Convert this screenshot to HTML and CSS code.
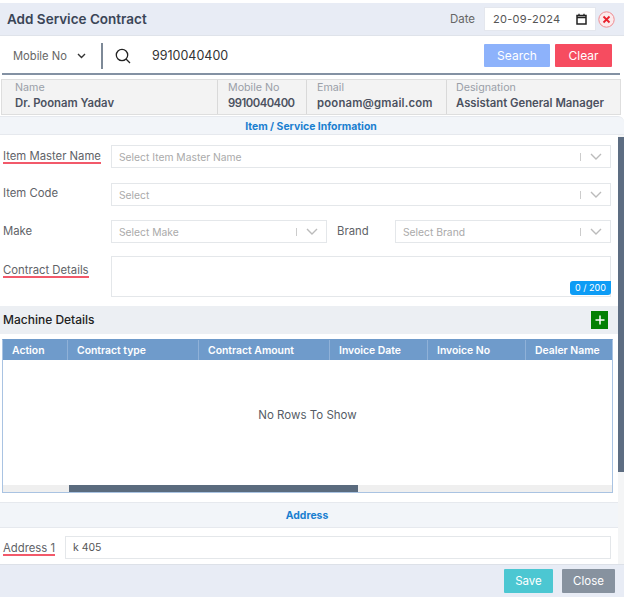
FILE: index.html
```html
<!DOCTYPE html>
<html lang="en">
<head>
    <meta charset="UTF-8">
    <title>Add Service Contract</title>
    <link rel="stylesheet" href="styles.css">
</head>
<body>
<div class="modal">
    <header class="head">
        <h1>Add Service Contract</h1>
        <span class="date-label">Date</span>
        <div class="date-box">
            <span>20-09-2024</span>
            <svg width="11" height="12" viewBox="0 0 11 12"><path d="M1 2.500h9v8.500H1z M1 4.500h9" fill="none" stroke="#222" stroke-width="1.500"/><path d="M3 .8v2M8 .8v2" stroke="#222" stroke-width="1.300"/></svg>
        </div>
        <svg class="close-x" width="17" height="17" viewBox="0 0 17 17"><circle cx="8.500" cy="8.500" r="7.700" fill="#fbeaec" stroke="#f08a8f" stroke-width="1"/><path d="M5.500 5.500l6 6M11.500 5.500l-6 6" stroke="#e8202c" stroke-width="1.800"/></svg>
    </header>

    <div class="search-row">
        <div class="search-type">
            <span>Mobile No</span>
            <svg width="9" height="6" viewBox="0 0 9 6"><path d="M1 1l3.500 3.500L8 1" fill="none" stroke="#333" stroke-width="1.400"/></svg>
        </div>
        <div class="search-sep"></div>
        <svg class="search-icon" width="16" height="16" viewBox="0 0 16 16"><circle cx="7" cy="7" r="5.700" fill="none" stroke="#222" stroke-width="1.300"/><path d="M11 11l4 4" stroke="#222" stroke-width="1.300"/></svg>
        <span class="search-value">9910040400</span>
        <button class="btn btn-search">Search</button>
        <button class="btn btn-clear">Clear</button>
    </div>

    <div class="info-strip">
        <div class="info-cell cell-name"><label>Name</label><b>Dr. Poonam Yadav</b></div>
        <div class="info-cell cell-mobile"><label>Mobile No</label><b>9910040400</b></div>
        <div class="info-cell cell-email"><label>Email</label><b>poonam@gmail.com</b></div>
        <div class="info-cell cell-desig"><label>Designation</label><b>Assistant General Manager</b></div>
    </div>

    <div class="section-title first">Item / Service Information</div>

    <div class="content">
        <div class="main">
            <div class="form-row row-item">
                <label class="field-label"><span class="req">Item Master Name</span></label>
                <div class="select"><span>Select Item Master Name</span><i></i><svg width="12" height="7" viewBox="0 0 12 7"><path d="M1 1l5 5 5-5" fill="none" stroke="#bbb" stroke-width="1.400"/></svg></div>
            </div>
            <div class="form-row row-code">
                <label class="field-label">Item Code</label>
                <div class="select"><span>Select</span><i></i><svg width="12" height="7" viewBox="0 0 12 7"><path d="M1 1l5 5 5-5" fill="none" stroke="#bbb" stroke-width="1.400"/></svg></div>
            </div>
            <div class="form-row row-make">
                <label class="field-label">Make</label>
                <div class="select"><span>Select Make</span><i></i><svg width="12" height="7" viewBox="0 0 12 7"><path d="M1 1l5 5 5-5" fill="none" stroke="#bbb" stroke-width="1.400"/></svg></div>
                <label class="field-label brand-label">Brand</label>
                <div class="select"><span>Select Brand</span><i></i><svg width="12" height="7" viewBox="0 0 12 7"><path d="M1 1l5 5 5-5" fill="none" stroke="#bbb" stroke-width="1.400"/></svg></div>
            </div>
            <div class="form-row row-details">
                <label class="field-label"><span class="req">Contract Details</span></label>
                <div class="textarea"><span class="counter">0 / 200</span></div>
            </div>

            <div class="machine-bar">
                <span>Machine Details</span>
                <div class="add-btn"><svg width="10" height="10" viewBox="0 0 10 10"><path d="M5 .5v9M.5 5h9" stroke="#fff" stroke-width="1.500"/></svg></div>
            </div>

            <div class="grid">
                <div class="grid-head">
                    <div class="col col-action">Action</div>
                    <div class="col col-type">Contract type</div>
                    <div class="col col-amount">Contract Amount</div>
                    <div class="col col-date">Invoice Date</div>
                    <div class="col col-no">Invoice No</div>
                    <div class="col col-dealer">Dealer Name</div>
                </div>
                <div class="grid-body">No Rows To Show</div>
                <div class="grid-scroll"><div class="grid-thumb"></div></div>
            </div>

            <div class="section-title address">Address</div>

            <div class="form-row row-address">
                <label class="field-label"><span class="req">Address 1</span></label>
                <div class="select value">k 405</div>
            </div>
        </div>
        <div class="scrollbar"><div class="scroll-thumb"></div></div>
    </div>

    <footer class="foot">
        <button class="btn btn-save">Save</button>
        <button class="btn btn-close">Close</button>
    </footer>
</div>
</body>
</html>
```

FILE: styles.css
```css
* {
    box-sizing: border-box;
}
body {
    margin: 0;
    background-color: #ffffff;
    font-family: Inter, "Open Sans", sans-serif;
    color: #555;
}
.modal {
    width: 624px;
    height: 597px;
    overflow: hidden;
    display: flex;
    flex-direction: column;
    padding-top: 3px;
}

/* header */
.head {
    height: 33px;
    flex: none;
    display: flex;
    align-items: center;
    padding-left: 7px;
    background-color: #e8ecf5;
    border-bottom: 1px solid #dfe3ea;
}
.head h1 {
    margin: 0;
    flex: 1;
    font-size: 13.500px;
    font-weight: 600;
    color: #3a4557;
}
.date-label {
    font-size: 11.500px;
    color: #666;
    margin-right: 9px;
}
.date-box {
    width: 112px;
    height: 24px;
    display: flex;
    align-items: center;
    justify-content: space-between;
    padding: 0 8px;
    background-color: #fff;
    border: 1px solid #e4e7ee;
    font-size: 11px;
    letter-spacing: 0.300px;
    color: #555;
}
.close-x {
    margin: 0 9px 0 2px;
}

/* search */
.search-row {
    height: 39px;
    flex: none;
    display: flex;
    align-items: center;
    margin: 0 4px 0 2px;
    padding: 2px 0 0 11px;
    border-bottom: 2px solid #8391a3;
}
.search-type {
    width: 76px;
    display: flex;
    align-items: center;
    justify-content: space-between;
    padding-right: 3px;
    font-size: 11.200px;
    color: #666;
}
.search-sep {
    width: 2px;
    height: 26px;
    margin: 0 12px;
    background-color: #7d8997;
}
.search-icon {
    flex: none;
}
.search-value {
    flex: 1;
    margin-left: 21px;
    font-size: 12.500px;
    color: #333;
}
.btn {
    border: 1px solid transparent;
    border-radius: 1px;
    font-family: inherit;
    color: #fff;
    padding: 0;
}
.btn-search {
    width: 66px;
    height: 23px;
    background-color: #8db2fb;
    font-size: 12px;
    margin-right: 5px;
}
.btn-clear {
    width: 57px;
    height: 23px;
    margin-right: 8px;
    background-color: #f64c60;
    font-size: 12px;
}

/* patient strip */
.info-strip {
    height: 36px;
    flex: none;
    display: flex;
    margin: 4px 3px 0 1px;
    background-color: #f3f3f3;
    border: 1px solid #dedede;
}
.info-cell {
    padding: 1px 0 0 13px;
    border-right: 1px solid #d9d9d9;
    display: flex;
    flex-direction: column;
    white-space: nowrap;
    overflow: hidden;
}
.info-cell label {
    font-size: 10.700px;
    line-height: 14px;
    color: #9a9fa8;
}
.info-cell b {
    font-size: 11.300px;
    line-height: 16px;
    font-weight: 600;
    color: #4b5160;
}
.cell-name {
    width: 216px;
}
.cell-mobile {
    width: 89px;
    padding-left: 10px;
}
.cell-mobile b {
    letter-spacing: -0.500px;
}
.cell-email {
    width: 140px;
    padding-left: 10px;
}
.cell-email b {
    letter-spacing: 0.200px;
}
.cell-desig {
    flex: 1;
    border-right: none;
    padding-left: 9px;
}

/* body */
.content {
    flex: 1;
    min-height: 0;
    display: flex;
}
.main {
    width: 618px;
    flex: none;
}
.scrollbar {
    flex: 1;
    padding-top: 2px;
    background-color: #f4f5f6;
}
.scroll-thumb {
    height: 335px;
    background-color: #5d6d82;
}
.section-title {
    flex: none;
    background-color: #f2f5f9;
    border-top: 1px solid #e6e9ee;
    border-bottom: 1px solid #e6e9ee;
    text-align: center;
    font-size: 10.400px;
    font-weight: 700;
    color: #1a7fd0;
}
.section-title.first {
    height: 19px;
    margin-top: 1px;
    line-height: 19px;
    border-top-right-radius: 6px;
    padding-right: 2px;
}
.section-title.address {
    height: 26px;
    margin-top: 9px;
    line-height: 25px;
    padding-right: 4px;
}
.form-row {
    display: flex;
    align-items: flex-start;
    padding: 0 7px 0 3px;
}
.row-item {
    margin-top: 10px;
}
.row-code {
    margin-top: 15px;
}
.row-make {
    margin-top: 14px;
}
.row-details {
    margin-top: 13px;
}
.row-address {
    margin-top: 8px;
}
.field-label {
    width: 108px;
    flex: none;
    padding-top: 2px;
    font-size: 11.300px;
    line-height: 17px;
    color: #5f6368;
    white-space: nowrap;
}
.req {
    display: inline-block;
    border-bottom: 2px solid #f2596a;
    line-height: 11px;
}
.row-item .field-label {
    padding-top: 3px;
}
.row-make .field-label {
    padding-top: 3px;
}
.row-details .field-label {
    padding-top: 6px;
}
.row-address .field-label {
    width: 62px;
    padding-top: 4px;
}
.brand-label {
    width: 58px;
    margin-left: 10px;
}
.select {
    flex: 1;
    height: 23px;
    display: flex;
    align-items: center;
    padding: 0 8px 0 7px;
    background-color: #fff;
    border: 1px solid #e4e7ea;
    font-size: 10.300px;
    color: #aaa;
}
.select span {
    flex: 1;
}
.select i {
    width: 1px;
    height: 8px;
    margin-right: 9px;
    background-color: #ccc;
}
.select.value {
    font-size: 10.500px;
    color: #555;
}
.textarea {
    flex: 1;
    height: 41px;
    display: flex;
    align-items: flex-end;
    justify-content: flex-end;
    border: 1px solid #e4e7ea;
    padding-bottom: 1px;
}
.counter {
    width: 41px;
    height: 14px;
    margin-right: -1px;
    border-radius: 3px 0 3px 3px;
    background-color: #0d9cf5;
    color: #fff;
    font-size: 9px;
    line-height: 14px;
    text-align: center;
}
.machine-bar {
    height: 28px;
    margin-top: 9px;
    display: flex;
    align-items: center;
    justify-content: space-between;
    padding: 0 10px 1px 3px;
    background-color: #eceff3;
    font-size: 12px;
    font-weight: 500;
    color: #222;
}
.add-btn {
    width: 17px;
    height: 18px;
    display: flex;
    align-items: center;
    justify-content: center;
    background-color: #038003;
}

/* grid */
.grid {
    width: 611px;
    height: 154px;
    margin: 5px 0 0 2px;
    display: flex;
    flex-direction: column;
    border: 1px solid #a9c3e2;
    border-top-color: #6f9bcb;
}
.grid-head {
    height: 20px;
    flex: none;
    display: flex;
    background-color: #6f9bcb;
    color: #fff;
    font-size: 10.400px;
    font-weight: 600;
    line-height: 21px;
}
.col {
    padding-left: 9px;
    border-right: 1px solid #8fb1d8;
    white-space: nowrap;
}
.col-action {
    width: 65px;
}
.col-type {
    width: 131px;
}
.col-amount {
    width: 131px;
}
.col-date {
    width: 98px;
}
.col-no {
    width: 98px;
}
.col-dealer {
    flex: 1;
    border-right: none;
}
.grid-body {
    flex: 1;
    display: flex;
    align-items: center;
    justify-content: center;
    font-size: 11.500px;
    color: #555c66;
    padding-bottom: 16px;
}
.grid-scroll {
    height: 7px;
    flex: none;
    padding-left: 66px;
    background-color: #efefef;
}
.grid-thumb {
    width: 289px;
    height: 7px;
    background-color: #5a6b7e;
}

/* footer */
.foot {
    height: 33px;
    flex: none;
    display: flex;
    justify-content: flex-end;
    align-items: center;
    padding-right: 9px;
    gap: 9px;
    background-color: #e8ecf5;
    border-top: 1px solid #dde1e8;
}
.btn-save {
    width: 49px;
    height: 24px;
    background-color: #4cc7d2;
    font-size: 11.500px;
}
.btn-close {
    width: 53px;
    height: 24px;
    background-color: #87929f;
    font-size: 11.500px;
}
```
